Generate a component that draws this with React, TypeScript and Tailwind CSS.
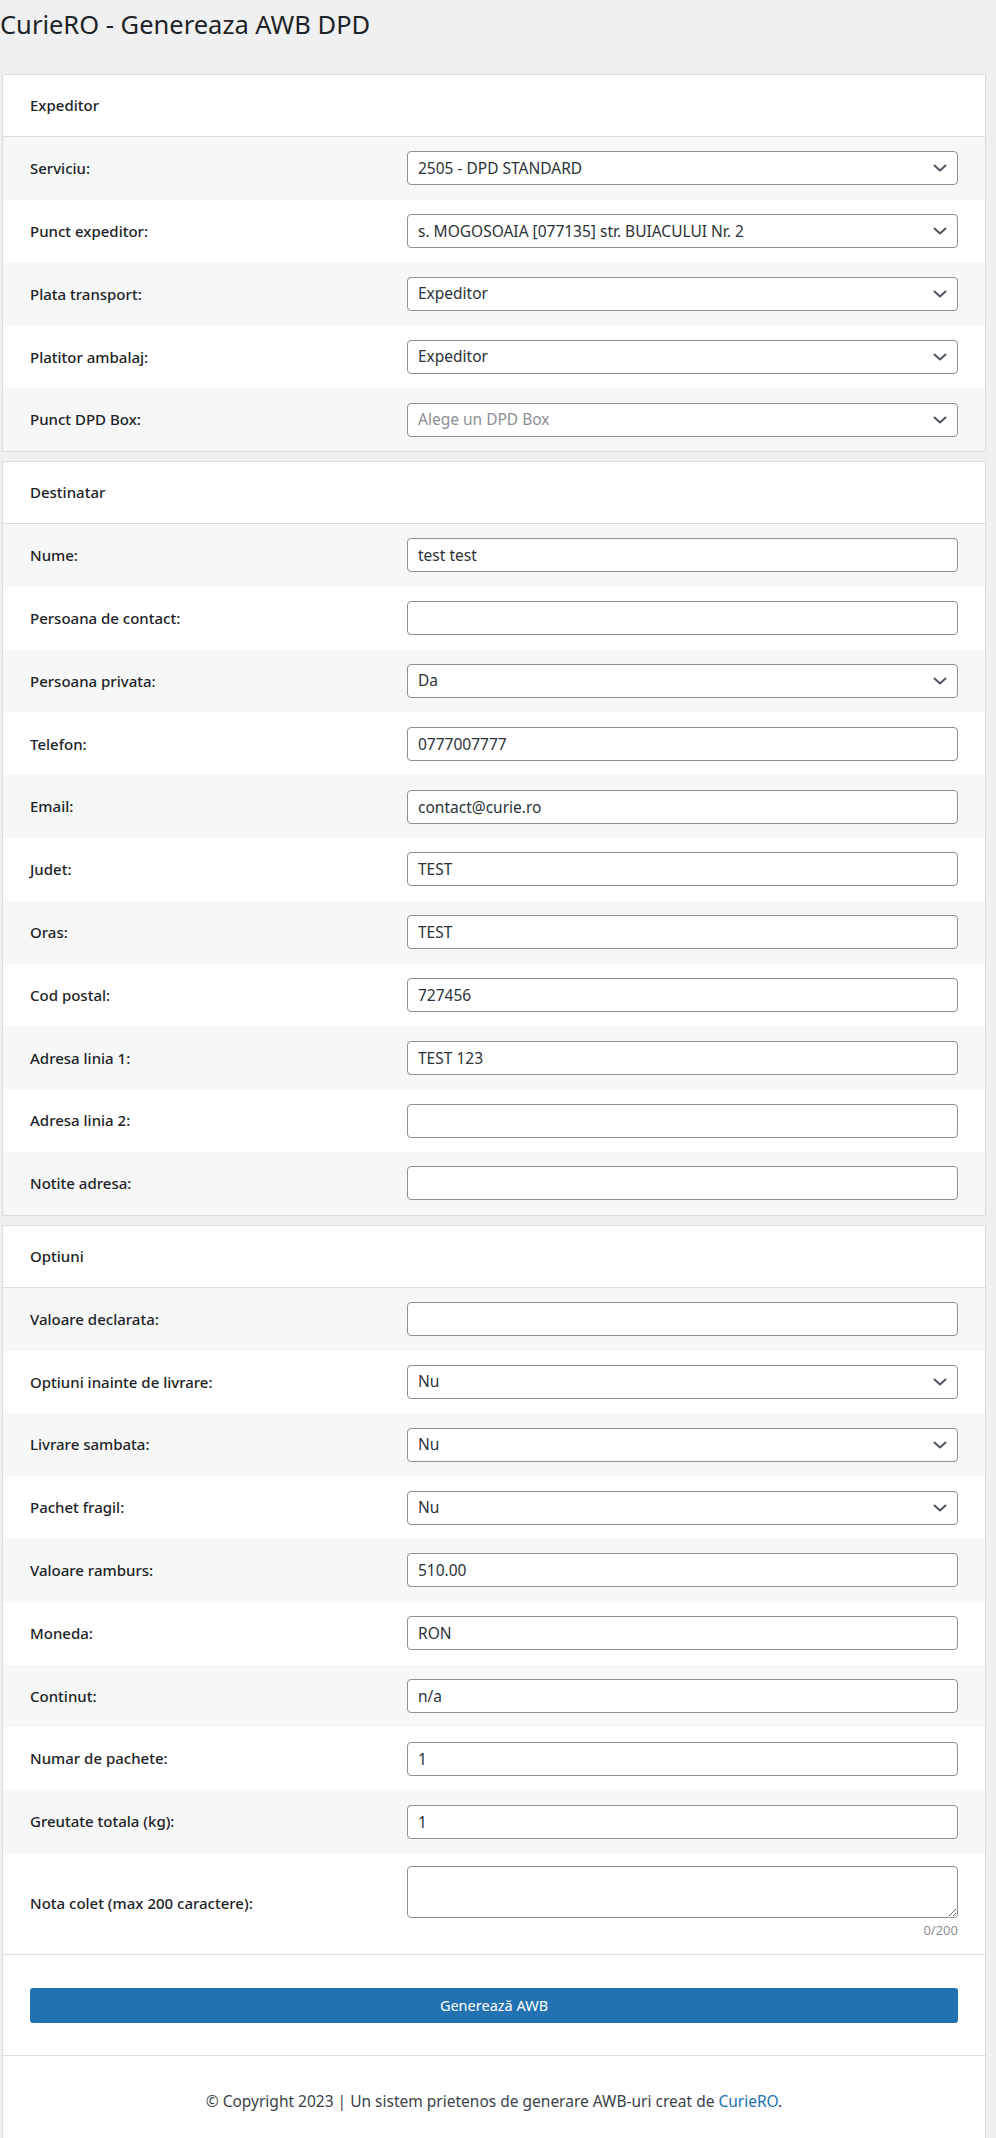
import React from "react";

type Field = {
	label: string;
	kind: "select" | "input";
	value?: string;
	placeholder?: boolean;
};

const expeditor: Field[] = [
	{ label: "Serviciu:", kind: "select", value: "2505 - DPD STANDARD" },
	{ label: "Punct expeditor:", kind: "select", value: "s. MOGOSOAIA [077135] str. BUIACULUI Nr. 2" },
	{ label: "Plata transport:", kind: "select", value: "Expeditor" },
	{ label: "Platitor ambalaj:", kind: "select", value: "Expeditor" },
	{ label: "Punct DPD Box:", kind: "select", value: "Alege un DPD Box", placeholder: true },
];

const destinatar: Field[] = [
	{ label: "Nume:", kind: "input", value: "test test" },
	{ label: "Persoana de contact:", kind: "input", value: "" },
	{ label: "Persoana privata:", kind: "select", value: "Da" },
	{ label: "Telefon:", kind: "input", value: "0777007777" },
	{ label: "Email:", kind: "input", value: "contact@curie.ro" },
	{ label: "Judet:", kind: "input", value: "TEST" },
	{ label: "Oras:", kind: "input", value: "TEST" },
	{ label: "Cod postal:", kind: "input", value: "727456" },
	{ label: "Adresa linia 1:", kind: "input", value: "TEST 123" },
	{ label: "Adresa linia 2:", kind: "input", value: "" },
	{ label: "Notite adresa:", kind: "input", value: "" },
];

const optiuni: Field[] = [
	{ label: "Valoare declarata:", kind: "input", value: "" },
	{ label: "Optiuni inainte de livrare:", kind: "select", value: "Nu" },
	{ label: "Livrare sambata:", kind: "select", value: "Nu" },
	{ label: "Pachet fragil:", kind: "select", value: "Nu" },
	{ label: "Valoare ramburs:", kind: "input", value: "510.00" },
	{ label: "Moneda:", kind: "input", value: "RON" },
	{ label: "Continut:", kind: "input", value: "n/a" },
	{ label: "Numar de pachete:", kind: "input", value: "1" },
	{ label: "Greutate totala (kg):", kind: "input", value: "1" },
];

const Chevron = () => (
	<svg width="14" height="8" viewBox="0 0 14 8" fill="none" className="absolute right-[10px] top-1/2 -translate-y-1/2">
		<path d="M1.5 1.5L7 6.5L12.5 1.5" stroke="#50575e" strokeWidth="2" strokeLinecap="round" strokeLinejoin="round" />
	</svg>
);

const Control = ({ field }: { field: Field }) => {
	if (field.kind === "select") {
		return (
			<div className="relative h-[34px] w-full rounded-[4px] border border-[#8c8f94] bg-white">
				<div
					className={`flex h-full items-center pl-[10px] pr-[34px] text-[15.5px] whitespace-nowrap ${
						field.placeholder ? "text-[#8c8f94]" : "text-[#2c3338]"
					}`}
				>
					{field.value}
				</div>
				<Chevron />
			</div>
		);
	}
	return (
		<input
			type="text"
			defaultValue={field.value}
			className="h-[34px] w-full rounded-[4px] border border-[#8c8f94] bg-white px-[10px] text-[15.5px] text-[#2c3338] outline-none"
		/>
	);
};

const Row = ({ field, index }: { field: Field; index: number }) => (
	<div
		className={`grid h-[62.8px] grid-cols-[377px_1fr] items-center px-[27px] ${
			index % 2 === 0 ? "bg-[#f6f7f7]" : "bg-white"
		}`}
	>
		<label className="text-[15px] font-medium text-[#1d2327]">{field.label}</label>
		<Control field={field} />
	</div>
);

const PanelHeader = ({ title }: { title: string }) => (
	<div className="flex h-[62px] items-center border-b border-[#dcdcde] px-[27px] text-[15px] font-medium text-[#1d2327]">
		{title}
	</div>
);

const App = () => (
	<div className="min-h-screen bg-[#f0f0f1] font-['Noto_Sans',sans-serif] text-[#1d2327]">
		<h1 className="h-[74px] pt-[5px] text-[25.5px] leading-[38px] font-normal text-[#1d2327]">
			CurieRO - Genereaza AWB DPD
		</h1>
		<div className="ml-[2px] mr-[10px] flex flex-col gap-[9px]">
			<section className="border border-[#dcdcde] bg-white">
				<PanelHeader title="Expeditor" />
				{expeditor.map((f, i) => (
					<Row key={f.label} field={f} index={i} />
				))}
			</section>

			<section className="border border-[#dcdcde] bg-white">
				<PanelHeader title="Destinatar" />
				{destinatar.map((f, i) => (
					<Row key={f.label} field={f} index={i} />
				))}
			</section>

			<section className="border border-[#dcdcde] bg-white">
				<PanelHeader title="Optiuni" />
				{optiuni.map((f, i) => (
					<Row key={f.label} field={f} index={i} />
				))}
				<div className="grid grid-cols-[377px_1fr] items-center bg-white px-[27px] pt-[13px] pb-[14px]">
					<label className="text-[15px] font-medium text-[#1d2327]">Nota colet (max 200 caractere):</label>
					<div className="flex flex-col">
						<textarea className="h-[52px] w-full rounded-[4px] border border-[#8c8f94] bg-white px-[10px] py-[4px] text-[15px] outline-none" />
						<div className="mt-[2px] text-right text-[13px] leading-[20px] text-[#8c8f94]">0/200</div>
					</div>
				</div>
				<div className="border-t border-[#dcdcde] px-[27px] pt-[33px] pb-[32px]">
					<button className="flex h-[35px] w-full items-center justify-center rounded-[3px] bg-[#2271b1] text-[14.5px] text-white">
						Generează AWB
					</button>
				</div>
				<div className="flex h-[92px] items-center justify-center border-t border-[#dcdcde] text-[15.5px] text-[#3c434a]">
					<p>
						© Copyright 2023 | Un sistem prietenos de generare AWB-uri creat de{" "}
						<a className="text-[#2271b1]">CurieRO</a>.
					</p>
				</div>
			</section>
		</div>
	</div>
);

export default App;
